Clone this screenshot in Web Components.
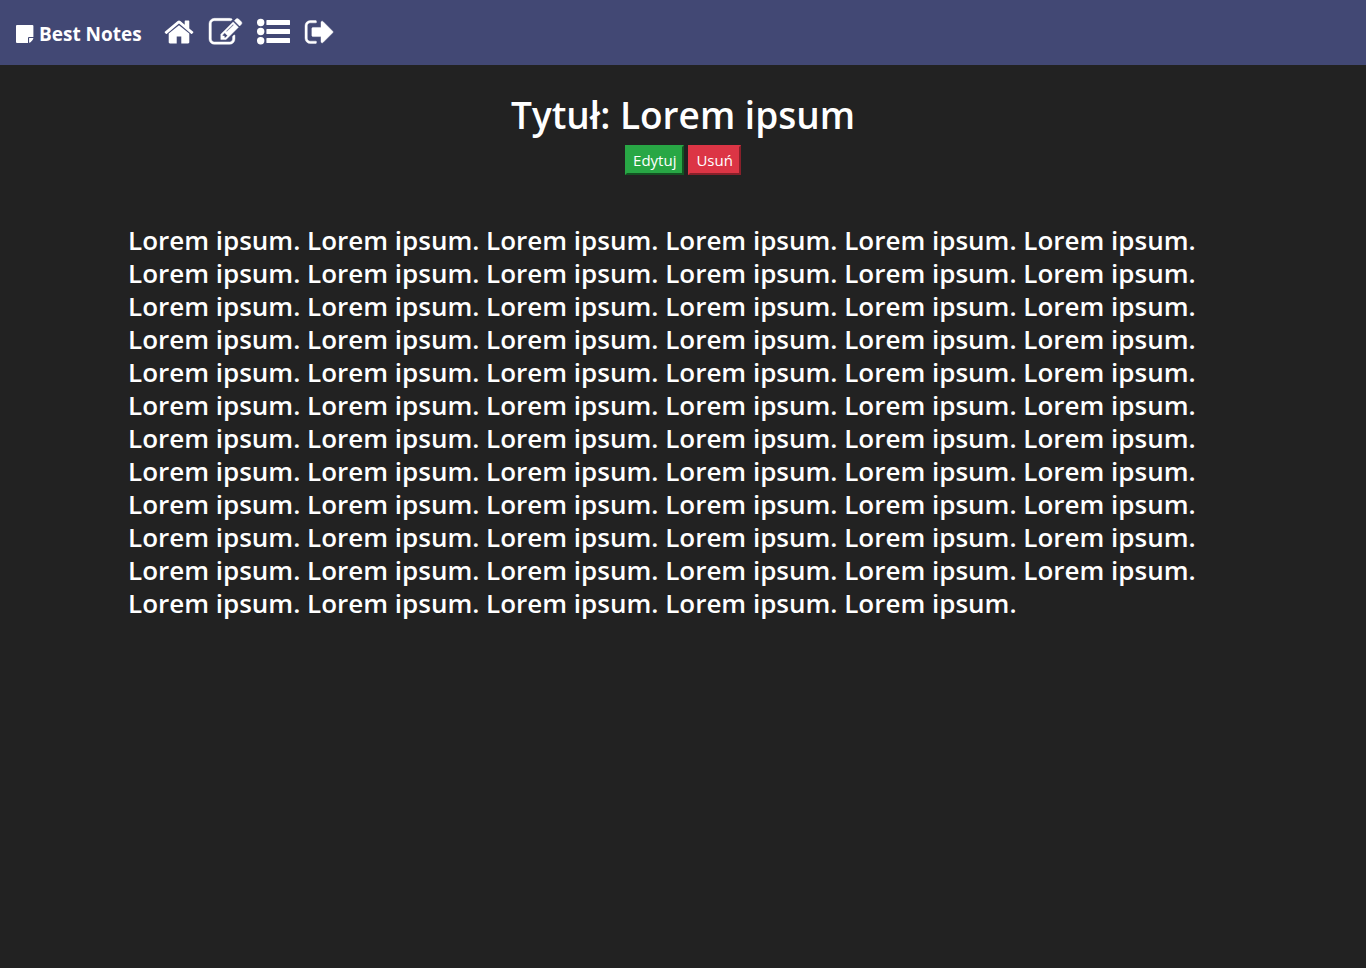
<!DOCTYPE html>
<html lang="pl">
<head>
<meta charset="utf-8">
<title>Best Notes</title>
<style>
  body { margin: 0; background: #222; color: #fff; font-family: "Open Sans", "Noto Sans", sans-serif; }
</style>
</head>
<body>
<notes-navbar></notes-navbar>
<main>
  <note-view>
    <span slot="title">Tytuł: Lorem ipsum</span>
    <note-button slot="actions" kind="edit">Edytuj</note-button>
    <note-button slot="actions" kind="delete">Usuń</note-button>
  </note-view>
</main>
<script>
const icons = {
  note: ['0 0 18 18', 18, 18, 'M1 0H16.4Q17.4 0 17.4 1V12H13Q12 12 12 13V18H1Q0 18 0 17V1Q0 0 1 0ZM13.1 13.1H17.4Q17.2 14.4 16.4 15.2L14.8 16.9Q14.2 17.6 13.1 17.8Z'],
  home: ['64 0 1664 1792', 30, 32, 'M1472 992v480q0 26-19 45t-45 19h-384v-384h-256v384h-384q-26 0-45-19t-19-45v-480q0-1 .5-3t.5-3l575-474 575 474q1 2 1 6zm223-69l-62 74q-8 9-21 11h-3q-13 0-21-7l-692-577-692 577q-12 8-24 7-13-2-21-11l-62-74q-8-10-7-23.5t11-21.5l719-599q32-26 76-26t76 26l244 204v-195q0-14 9-23t23-9h192q14 0 23 9t9 23v408l219 182q10 8 11 21.5t-7 23.5z'],
  edit: ['0 0 1792 1792', 33, 33, 'M888 1184l116-116-152-152-116 116v56h96v96h56zm440-720q-16-16-33 1l-350 350q-17 17-1 33t33-1l350-350q17-17 1-33zm80 594v190q0 119-84.5 203.5t-203.5 84.5h-832q-119 0-203.5-84.5t-84.5-203.5v-832q0-119 84.5-203.5t203.5-84.5h832q63 0 117 25 15 7 18 23 3 17-9 29l-49 49q-14 14-32 8-23-6-45-6h-832q-66 0-113 47t-47 113v832q0 66 47 113t113 47h832q66 0 113-47t47-113v-126q0-13 9-22l64-64q15-15 35-7t20 29zm-96-738l288 288-672 672h-288v-288zm444 132l-92 92-288-288 92-92q28-28 68-28t68 28l152 152q28 28 28 68t-28 68z', 24],
  list: ['0 0 33 32', 33, 32, 'M0 6.5a3.7 3.7 0 1 0 7.4 0a3.7 3.7 0 1 0-7.4 0ZM0 15.5a3.7 3.7 0 1 0 7.4 0a3.7 3.7 0 1 0-7.4 0ZM0 24.7a3.7 3.7 0 1 0 7.4 0a3.7 3.7 0 1 0-7.4 0ZM10 4H32.4Q33 4 33 4.6V8.4Q33 9 32.4 9H10Q9.4 9 9.4 8.4V4.6Q9.4 4 10 4ZM10 13H32.4Q33 13 33 13.6V17.4Q33 18 32.4 18H10Q9.4 18 9.4 17.4V13.6Q9.4 13 10 13ZM10 22H32.4Q33 22 33 22.6V26.4Q33 27 32.4 27H10Q9.4 27 9.4 26.4V22.6Q9.4 22 10 22Z'],
  exit: ['64 0 1568 1792', 28, 32, 'M704 1440q0 4 1 20t.5 26.5-3 23.5-10 19.5-20.5 6.5h-320q-119 0-203.5-84.5t-84.5-203.5v-704q0-119 84.5-203.5t203.5-84.5h320q13 0 22.5 9.5t9.5 22.5q0 4 1 20t.5 26.5-3 23.5-10 19.5-20.5 6.5h-320q-66 0-113 47t-47 113v704q0 66 47 113t113 47h312l11.5 1 11.5 3 8 5.5 7 9 2 13.5zm928-544q0 26-19 45l-544 544q-19 19-45 19t-45-19-19-45v-288h-448q-26 0-45-19t-19-45v-384q0-26 19-45t45-19h448v-288q0-26 19-45t45-19 45 19l544 544q19 19 19 45z', 24]
};

customElements.define('notes-icon', class extends HTMLElement {
  constructor() { super(); this.attachShadow({ mode: 'open' }); }
  connectedCallback() {
    const [box, w, h, d, stroke = 0] = icons[this.getAttribute('name')];
    this.shadowRoot.innerHTML = `<style>:host{display:block}svg{display:block;overflow:visible;fill:currentColor;stroke:currentColor}</style>
      <svg viewBox="${box}" width="${w}" height="${h}" stroke-width="${stroke}" aria-hidden="true"><path d="${d}"/></svg>`;
  }
});

customElements.define('notes-navbar', class extends HTMLElement {
  constructor() {
    super();
    this.attachShadow({ mode: 'open' }).innerHTML = `<style>
      :host{display:block;background:#424874}
      nav{display:flex;align-items:center;gap:22px;min-height:65px;padding:0 16px;box-sizing:border-box}
      a{color:#fff;text-decoration:none}
      .brand{display:flex;align-items:center;gap:5px;font-size:19px;line-height:30px;font-weight:700;padding-top:3px}
      ul{display:flex;gap:15px;margin:0;padding:0 0 1px;list-style:none}
      li a{display:block}
    </style>
    <nav>
      <a class="brand" href="#"><notes-icon name="note"></notes-icon><span>Best Notes</span></a>
      <ul>
        <li><a href="#" aria-label="Home"><notes-icon name="home"></notes-icon></a></li>
        <li><a href="#" aria-label="New note"><notes-icon name="edit"></notes-icon></a></li>
        <li><a href="#" aria-label="List"><notes-icon name="list"></notes-icon></a></li>
        <li><a href="#" aria-label="Log out"><notes-icon name="exit"></notes-icon></a></li>
      </ul>
    </nav>`;
  }
});

customElements.define('note-button', class extends HTMLElement {
  constructor() {
    super();
    this.attachShadow({ mode: 'open' }).innerHTML = `<style>
      :host{display:block;--c:#28a745}
      :host([kind=delete]){--c:#dc3545}
      button{display:block;margin:0;height:30px;padding:0 6px;border:2px outset var(--c);background:var(--c);color:#fff;font-family:inherit;font-size:15px;line-height:26px}
    </style><button type="button"><slot></slot></button>`;
  }
});

customElements.define('note-view', class extends HTMLElement {
  constructor() {
    super();
    this.attachShadow({ mode: 'open' }).innerHTML = `<style>
      :host{display:block;padding:26px 15px}
      h1{margin:0 0 6px;text-align:center;font-size:37px;line-height:48px;font-weight:600}
      .actions{display:flex;justify-content:center;gap:4px}
      .body{max-width:1110px;margin:49px auto 0;font-size:26px;line-height:33px;font-weight:600}
      p{margin:0}
    </style>
    <h1><slot name="title"></slot></h1>
    <div class="actions"><slot name="actions"></slot></div>
    <div class="body"><p></p></div>`;
    this.shadowRoot.querySelector('p').textContent = Array(71).fill('Lorem ipsum.').join(' ');
  }
});
</script>
</body>
</html>
